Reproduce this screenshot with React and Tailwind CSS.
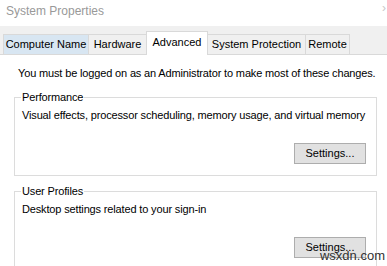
import React from 'react';

const tabs = [
  { name: 'Computer Name', state: 'hover', w: 'w-[86px]' },
  { name: 'Hardware', state: 'idle', w: 'w-[59px]' },
  { name: 'Advanced', state: 'active', w: 'w-[62px]' },
  { name: 'System Protection', state: 'idle', w: 'w-[99px]' },
  { name: 'Remote', state: 'idle', w: 'w-[45px]' },
];

const Tab = ({ name, state, w }) => {
  if (state === 'active') {
    return (
      <div className={`${w} h-[24px] -mb-px -ml-px pt-[3px] text-center bg-white border border-b-0 border-[#d9d9d9] relative z-10`}>
        {name}
      </div>
    );
  }
  return (
    <div
      className={`${w} h-[20px] pt-[2px] text-center border border-b-0 border-[#d9d9d9] -ml-px first:ml-0 ${
        state === 'hover' ? 'bg-[#d8e6f2]' : 'bg-[#f0f0f0]'
      }`}
    >
      {name}
    </div>
  );
};

const Group = ({ title, text, last }) => (
  <fieldset className={`min-w-0 ml-[14px] mr-[10px] border border-[#dcdcdc] px-[7px] ${last ? 'pb-[20px]' : 'pb-[11px]'}`}>
    <legend className="px-[1px] -ml-px">{title}</legend>
    <p className="mt-[3px]">{text}</p>
    <div className="flex justify-end mt-[20px] mr-[3px]">
      <button className="w-[72px] h-[21px] bg-[#e1e1e1] border border-[#adadad] text-black tracking-normal">Settings...</button>
    </div>
  </fieldset>
);

export default function App() {
  return (
    <div className="w-[387px] h-[266px] bg-white overflow-hidden relative whitespace-nowrap text-[11px] tracking-[-0.15px] text-[#000] font-['Liberation_Sans',Arial,sans-serif] leading-[15px]">
      {/* title bar */}
      <div className="h-[26px] pl-[6px] pt-[4px] flex justify-between tracking-normal">
        <span className="text-[12px] text-[#999999]">System Properties</span>
        <span className="text-[12px] text-[#c8c8c8] pr-[1px] -mt-[3px]">›</span>
      </div>

      {/* tab strip */}
      <div className="h-[29px] bg-[#f0f0f0] flex items-end pl-[3px] border-b border-[#d9d9d9] tracking-normal">
        {tabs.map(t => (
          <Tab key={t.name} {...t} />
        ))}
      </div>

      {/* page */}
      <div className="pt-[11px]">
        <p className="pl-[18px] mb-[9px]">You must be logged on as an Administrator to make most of these changes.</p>
        <Group title="Performance" text="Visual effects, processor scheduling, memory usage, and virtual memory" />
        <div className="h-[8px]" />
        <Group title="User Profiles" text="Desktop settings related to your sign-in" last />
      </div>

      <span className="absolute right-[2px] bottom-[4px] text-[13px] text-[#333] leading-none tracking-normal">wsxdn.com</span>
    </div>
  );
}
